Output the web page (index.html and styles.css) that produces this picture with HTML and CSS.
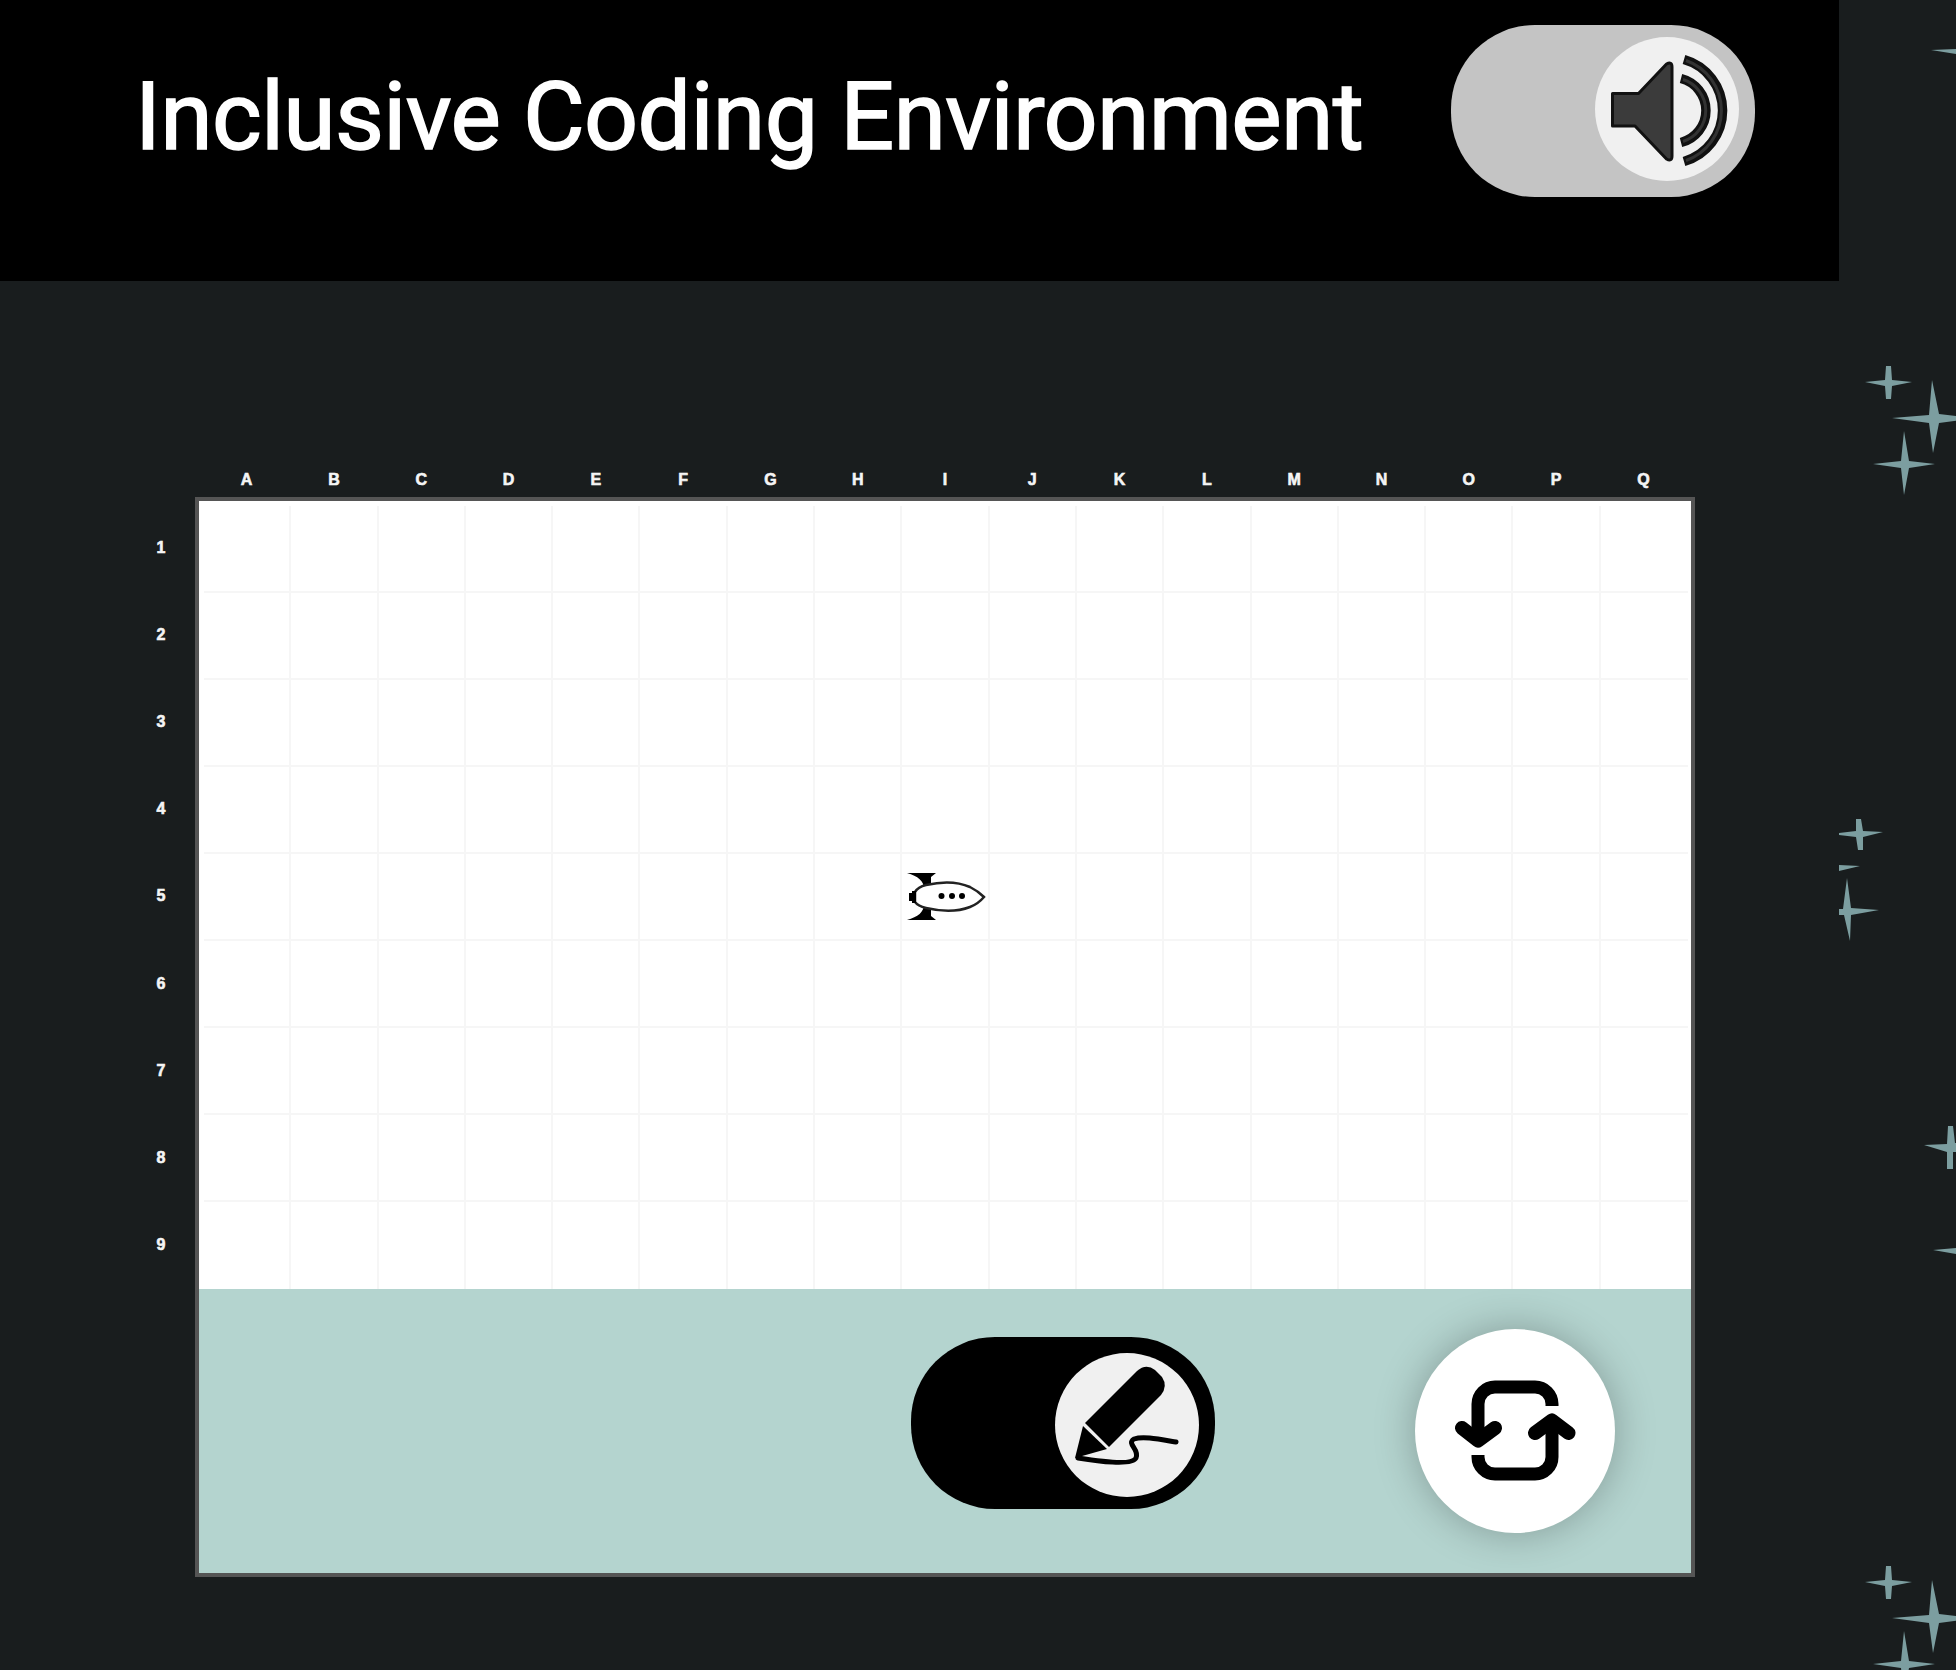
FILE: index.html
```
<!DOCTYPE html>
<html lang="en">

<head>
    <meta charset="UTF-8">
    <meta name="viewport" content="width=device-width, initial-scale=1.0">
    <title>Inclusive Coding Environment</title>
    <link rel="stylesheet" href="styles.css">
</head>

<body>

    <div class="page">
        <header class="header">
            <h1 class="title">Inclusive Coding Environment</h1>
            <button class="toggle sound-toggle" aria-label="Sound">
                <span class="knob">
                    <svg viewBox="0 0 144 144">
                        <path d="M17.500 56.500H43.500L71.500 27Q77 24 77 30V119Q77 125 71.500 122L40 89H17.500Z" fill="#3b3b3b" stroke="#111" stroke-width="3" stroke-linejoin="round"/>
                        <path d="M86 41.500A33 33 0 0 1 86 105.500" fill="none" stroke="#111" stroke-width="9.500"/>
                        <path d="M88 42.500A32.500 32.500 0 0 1 88 104.500" fill="none" stroke="#333" stroke-width="3"/>
                        <path d="M89 22.500A53 53 0 0 1 89 124.500" fill="none" stroke="#111" stroke-width="9.500"/>
                        <path d="M91 23.500A53 53 0 0 1 91 123.500" fill="none" stroke="#333" stroke-width="3"/>
                    </svg>
                </span>
            </button>
        </header>

        <main class="stage">
            <div class="columns" id="columns"></div>
            <div class="stage-row">
                <div class="rows" id="rows"></div>
                <div class="board">
                    <div class="grid" id="grid"></div>
                    <div class="controls">
                        <button class="toggle draw-toggle" aria-label="Draw">
                            <span class="knob">
                                <svg viewBox="0 0 144 144">
                                    <path d="M30 70L82 18Q91 10 100 17L107 24Q113 33 106 42L54 94Z"/>
                                    <path d="M28 73L52 96L20 105Z"/>
                                    <path d="M23 105C42 108 77 113 81 105C85 96 71 91 79 86C88 83 103 86 121 89" fill="none" stroke="#000" stroke-width="5" stroke-linecap="round"/>
                                </svg>
                            </span>
                        </button>
                        <button class="reset" aria-label="Reset">
                            <svg viewBox="0 0 200 204" fill="none" stroke="#000" stroke-width="13" stroke-linejoin="round">
                                <path d="M137 77V75A17 17 0 0 0 120 58H80A17 17 0 0 0 63 75V111"/>
                                <path d="M63 126V128A17 17 0 0 0 80 145H120A17 17 0 0 0 137 128V92"/>
                                <path d="M47 99L63 111.500L80 99M120 104L137 91.500L153.500 104" stroke-width="14" stroke-linecap="round"/>
                            </svg>
                        </button>
                    </div>
                </div>
            </div>
        </main>
    </div>

    <svg class="stars" viewBox="1839 0 117 1670">
        <defs>
            <g id="cluster">
                <path d="M1865 382L1885 380L1886 366H1891L1892 380L1912 382L1892 386L1891 399H1886L1885 386Z"/>
                <path d="M1892 418L1929 415L1932 380L1939 414L1975 418L1939 423L1933 453L1929 423Z"/>
                <path d="M1873 464L1901 461L1904 431L1909 461L1935 464L1909 468L1904 495L1901 468Z"/>
            </g>
        </defs>
        <path d="M1931 50L1956 49V54Z"/>
        <use href="#cluster"/>
        <path d="M1838 833L1856 831V819H1861L1863 831L1883 832L1863 837V850H1858L1856 837L1839 835Z"/>
        <path d="M1839 865L1860 866L1839 871Z"/>
        <path d="M1839 909H1843L1847 878L1851 908L1879 910L1851 915L1850 941L1844 915H1839Z"/>
        <path d="M1924 1145L1947 1144L1948 1126H1953L1955 1143H1956V1152H1953V1169H1947V1152Z"/>
        <path d="M1933 1250L1956 1248V1254Z"/>
        <use href="#cluster" y="1200"/>
    </svg>

    <script>
        const grid = document.getElementById("grid");
        const columns = document.getElementById("columns");
        const rows = document.getElementById("rows");

        const rocket = `
            <svg class="rocket" viewBox="0 0 130 90">
                <path d="M27 23H56L51 27V37L44 39C44 31 38 26 27 23ZM27 70H56L51 66V56L44 54C44 62 38 67 27 70ZM29 43H36V51H29Z" fill="#000"/>
                <path d="M35 42Q38 37 46 35Q72 29 90 37Q98 41 104 47Q98 54 90 57Q72 64 46 58Q38 56 35 52Z" fill="#fff" stroke="#222" stroke-width="2.500"/>
                <path d="M34 41V53" stroke="#000" stroke-width="4"/>
                <circle cx="61.500" cy="46" r="3"/><circle cx="72" cy="46" r="3"/><circle cx="82" cy="46" r="3"/>
            </svg>`;

        "ABCDEFGHIJKLMNOPQ".split("").forEach(letter => {
            columns.innerHTML += `<span>${letter}</span>`;
        });

        for (let row = 1; row <= 9; row++) {
            rows.innerHTML += `<span>${row}</span>`;
            for (let col = 1; col <= 17; col++) {
                grid.innerHTML += `<div class="cell">${row === 5 && col === 9 ? rocket : ""}</div>`;
            }
        }
    </script>

</body>

</html>
```

FILE: styles.css
```
* {
    box-sizing: border-box;
}

body {
    margin: 0;
    display: flex;
    height: 1670px;
    overflow: hidden;
    background-color: #191d1e;
    font-family: "Liberation Sans", Arial, sans-serif;
}

button {
    border: none;
    padding: 0;
    cursor: pointer;
}

svg {
    display: block;
}

.page {
    width: 1839px;
    flex: none;
}

.header {
    display: flex;
    justify-content: space-between;
    height: 281px;
    padding: 25px 84px 0 135px;
    background-color: #000;
}

.title {
    margin: 36px 0 0;
    font-family: Roboto, sans-serif;
    font-size: 95px;
    font-weight: 400;
    line-height: 111px;
    letter-spacing: -0.7px;
    white-space: nowrap;
    color: #fff;
    -webkit-text-stroke: 1.5px #fff;
}

.toggle {
    display: flex;
    justify-content: flex-end;
    flex: none;
    width: 304px;
    height: 172px;
    border-radius: 84px;
}

.sound-toggle {
    padding: 12px 16px 0 0;
    background-color: #c4c4c4;
}

.draw-toggle {
    margin-top: 48px;
    padding: 16px 16px 0 0;
    background-color: #000;
}

.knob {
    width: 144px;
    height: 144px;
    border-radius: 50%;
    background-color: #f0f0f0;
}

.stage {
    padding: 183px 0 0 127px;
}

.columns {
    display: grid;
    grid-template-columns: repeat(17, 1fr);
    width: 1484px;
    height: 33px;
    margin-left: 76px;
    padding-top: 6px;
}

.columns span,
.rows span {
    font-size: 16px;
    font-weight: bold;
    line-height: 20px;
    text-align: center;
    color: #f5f5f5;
    -webkit-text-stroke: 0.6px #f5f5f5;
}

.stage-row {
    display: flex;
}

.rows {
    display: grid;
    grid-template-rows: repeat(9, 1fr);
    align-items: center;
    width: 68px;
    height: 785px;
    margin-top: 7px;
}

.board {
    width: 1500px;
    height: 1080px;
    border: 4px solid #555;
    background-color: #fff;
}

.grid {
    display: grid;
    grid-template-columns: repeat(17, 1fr);
    grid-template-rows: repeat(9, 1fr);
    height: 788px;
    padding: 5px 3px 0 5px;
}

.cell {
    border-right: 2px solid #f6f6f6;
    border-bottom: 2px solid #f6f6f6;
    overflow: hidden;
}

.cell:nth-child(17n) {
    border-right: none;
}

.cell:nth-child(n+137) {
    border-bottom: none;
}

.rocket {
    width: 130px;
    height: 90px;
    margin: -4px 0 0 -22px;
}

.controls {
    display: flex;
    justify-content: flex-end;
    gap: 200px;
    height: 284px;
    padding-right: 76px;
    background-color: #b4d4cf;
}

.reset {
    width: 200px;
    height: 204px;
    margin-top: 40px;
    border-radius: 50%;
    background-color: #fff;
    box-shadow: 0 0 40px rgba(0, 0, 0, 0.27);
}

.stars {
    flex: none;
    width: 117px;
    height: 1670px;
    fill: #7c9ea0;
}
```
